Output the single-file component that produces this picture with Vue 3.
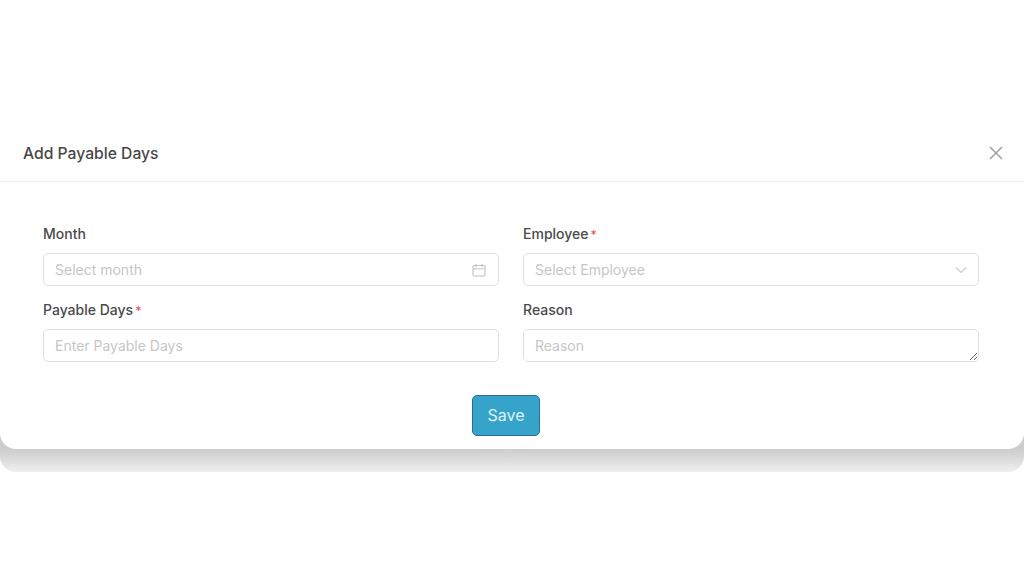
<script setup>
const fields = [
  { id: 'month', label: 'Month', placeholder: 'Select month', icon: 'calendar' },
  { id: 'employee', label: 'Employee', placeholder: 'Select Employee', required: true, icon: 'chevron' },
  { id: 'days', label: 'Payable Days', placeholder: 'Enter Payable Days', required: true },
  { id: 'reason', label: 'Reason', placeholder: 'Reason', textarea: true }
];
</script>

<template>
  <div class="page">
    <div class="shadow">
      <section class="modal">
        <header class="modal-header">
          <h2>Add Payable Days</h2>
          <button class="close" type="button" aria-label="Close">
            <svg width="14" height="14" viewBox="0 0 14 14" fill="none" stroke="#a3a3a3" stroke-width="1.6">
              <path d="M1 1l12 12M13 1L1 13" />
            </svg>
          </button>
        </header>
        <form class="modal-body" @submit.prevent>
          <div class="form-grid">
            <div v-for="field in fields" :key="field.id" class="form-group">
              <label :for="field.id">
                {{ field.label }}<span v-if="field.required" class="req">*</span>
              </label>
              <div class="control">
                <textarea v-if="field.textarea" :id="field.id" :placeholder="field.placeholder" rows="1"></textarea>
                <input v-else :id="field.id" :placeholder="field.placeholder" />
                <svg v-if="field.icon === 'calendar'" class="icon cal" width="14" height="14" viewBox="0 0 14 14" fill="none" stroke="#c2c2c2" stroke-width="1.1">
                  <rect x="1" y="2.5" width="12" height="10.5" rx="1" />
                  <path d="M1 5.8h12M4 1v3M10 1v3" />
                </svg>
                <svg v-if="field.icon === 'chevron'" class="icon" width="12" height="8" viewBox="0 0 12 8" fill="none" stroke="#cdcdcd" stroke-width="1.2">
                  <path d="M1 1.5l5 5 5-5" />
                </svg>
              </div>
            </div>
          </div>
          <div class="actions">
            <button class="save" type="submit">Save</button>
          </div>
        </form>
      </section>
    </div>
  </div>
</template>

<style>
html,
body {
  background: #fff;
}
</style>

<style scoped>
.page {
  height: 585px;
  padding-top: 127px;
  box-sizing: border-box;
  font-family: Inter, "Liberation Sans", sans-serif;
  overflow: hidden;
}

.shadow {
  padding-bottom: 23px;
  border-radius: 0 0 16px 16px;
  background: linear-gradient(#cdcdcd 93.4%, #efefef 100%);
}

.modal {
  height: 322px;
  background: #fff;
  border-radius: 0 0 16px 16px;
  box-sizing: border-box;
}

.modal-header {
  height: 55px;
  box-sizing: border-box;
  display: flex;
  align-items: center;
  justify-content: space-between;
  padding: 0 21px 2px 23px;
  border-bottom: 1px solid #efefef;
}

h2 {
  margin: 0;
  font-size: 15.7px;
  font-weight: 500;
  color: #484848;
}

.close {
  display: flex;
  padding: 0;
  border: none;
  background: none;
}

.modal-body {
  padding: 42px 45px 0 43px;
}

.form-grid {
  display: grid;
  grid-template-columns: 1fr 1fr;
  column-gap: 24px;
  row-gap: 14px;
}

label {
  display: block;
  height: 20px;
  margin-bottom: 9px;
  font-size: 14px;
  line-height: 20px;
  font-weight: 500;
  color: #4a4a4a;
}

.req {
  margin-left: 2px;
  font-size: 12px;
  color: #e8595e;
}

.control {
  position: relative;
  height: 33px;
}

input,
textarea {
  display: block;
  width: 100%;
  height: 33px;
  box-sizing: border-box;
  padding: 7px 11px;
  border: 1px solid #e0e0e0;
  border-radius: 5px;
  outline: none;
  background: #fff;
  font-family: inherit;
  font-size: 14px;
  line-height: 18px;
}

textarea {
  resize: vertical;
}

input::placeholder,
textarea::placeholder {
  color: #c6c6c6;
  opacity: 1;
}

.icon {
  position: absolute;
  right: 12px;
  top: 50%;
  transform: translateY(-50%);
}

.cal {
  right: 13px;
}

.actions {
  display: flex;
  justify-content: center;
  margin-top: 33px;
  padding-right: 10px;
}

.save {
  width: 68px;
  height: 41px;
  padding: 0 0 2px;
  border: 1px solid #2a6c98;
  border-radius: 5px;
  background: #36a4ca;
  color: #dff1f8;
  font-family: inherit;
  font-size: 16px;
}
</style>
